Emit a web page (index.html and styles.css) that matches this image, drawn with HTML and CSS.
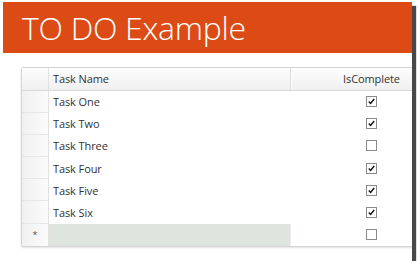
FILE: index.html
```html
<!DOCTYPE html>
<html lang="en">
<head>
    <meta charset="UTF-8">
    <title>TO DO Example</title>
    <link rel="stylesheet" href="styles.css">
</head>
<body>
    <div class="window">
        <div class="app-header">
            <h1>TO DO Example</h1>
        </div>

        <div class="grid">
            <div class="row head">
                <div class="row-header"></div>
                <div class="cell name">Task Name</div>
                <div class="cell done">IsComplete</div>
            </div>
            <div class="row">
                <div class="row-header"></div>
                <div class="cell name">Task One</div>
                <div class="cell done"><span class="check on"><svg viewBox="0 0 11 11"><path d="M2.2 5.6 L4.4 8 L8.8 2.4"/></svg></span></div>
            </div>
            <div class="row">
                <div class="row-header"></div>
                <div class="cell name">Task Two</div>
                <div class="cell done"><span class="check on"><svg viewBox="0 0 11 11"><path d="M2.2 5.6 L4.4 8 L8.8 2.4"/></svg></span></div>
            </div>
            <div class="row">
                <div class="row-header"></div>
                <div class="cell name">Task Three</div>
                <div class="cell done"><span class="check"></span></div>
            </div>
            <div class="row">
                <div class="row-header"></div>
                <div class="cell name">Task Four</div>
                <div class="cell done"><span class="check on"><svg viewBox="0 0 11 11"><path d="M2.2 5.6 L4.4 8 L8.8 2.4"/></svg></span></div>
            </div>
            <div class="row">
                <div class="row-header"></div>
                <div class="cell name">Task Five</div>
                <div class="cell done"><span class="check on"><svg viewBox="0 0 11 11"><path d="M2.2 5.6 L4.4 8 L8.8 2.4"/></svg></span></div>
            </div>
            <div class="row">
                <div class="row-header"></div>
                <div class="cell name">Task Six</div>
                <div class="cell done"><span class="check on"><svg viewBox="0 0 11 11"><path d="M2.2 5.6 L4.4 8 L8.8 2.4"/></svg></span></div>
            </div>
            <div class="row new">
                <div class="row-header">*</div>
                <div class="cell name"></div>
                <div class="cell done"><span class="check"></span></div>
            </div>
        </div>
    </div>
</body>
</html>
```

FILE: styles.css
```css
body {
    margin: 0;
    padding: 2px 0 0 3px;
    background-color: #fff;
    font-family: "Open Sans", "Noto Sans", sans-serif;
}

.window {
    width: 409px;
    height: 259px;
    background-color: #fff;
    overflow: hidden;
    box-shadow: 4px 4px 1px rgba(40, 40, 40, 0.85);
}

.app-header {
    height: 51px;
    background-color: #dc4a15;
    display: flex;
    align-items: center;
    padding-left: 19px;
}

.app-header h1 {
    margin: 0;
    color: #fff;
    font-size: 32px;
    font-weight: 300;
    letter-spacing: -0.3px;
}

.grid {
    margin: 14px 0 0 18px;
    width: 430px;
    border: 1px solid #d4d4d4;
    border-radius: 2px;
    box-shadow: 0 1px 2px rgba(0, 0, 0, 0.12);
}

.row {
    display: flex;
    height: 22.2px;
}

.row.head {
    height: 21.5px;
    background: linear-gradient(#fdfdfd, #f0f0f0);
    border-bottom: 1px solid #d8d8d8;
}

.row-header {
    width: 26px;
    flex-shrink: 0;
    border-right: 1px solid #e2e2e2;
    border-bottom: 1px solid #e6e6e6;
    background: linear-gradient(to right, #f0f0f0, #fbfbfb);
    font-size: 9px;
    color: #555;
    text-align: center;
    line-height: 22px;
}

.row.head .row-header {
    background: none;
    border-bottom: none;
}

.row.new .row-header {
    border-bottom: none;
}

.cell {
    display: flex;
    align-items: center;
    font-size: 11px;
    letter-spacing: -0.1px;
    color: #333;
}

.name {
    width: 237px;
    padding-left: 4px;
    flex-shrink: 0;
}

.done {
    flex: 1;
    justify-content: center;
}

.row.head .name {
    border-right: 1px solid #dcdcdc;
    box-shadow: 1px 0 0 #fff;
}

.row.new .name {
    background-color: #dde3dd;
    border-right: 1px solid #ececec;
}

.check {
    width: 9px;
    height: 9px;
    border: 1px solid #8a8a8a;
    background-color: #fff;
    display: flex;
}

.check svg {
    width: 11px;
    height: 11px;
    margin: -1px 0 0 0;
    fill: none;
    stroke: #111;
    stroke-width: 1.7;
}
```
